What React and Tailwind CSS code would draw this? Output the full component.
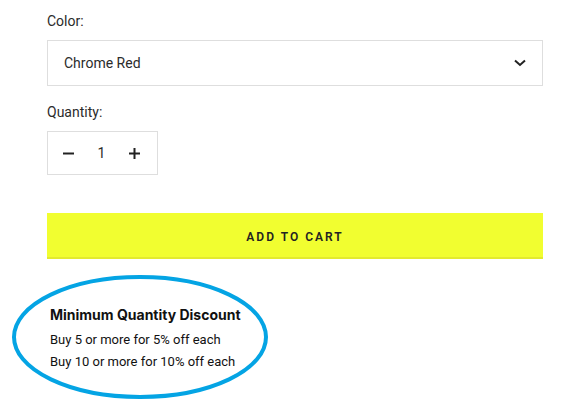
import React from "react";

export default function App() {
  return (
    <div className="relative w-[582px] h-[403px] bg-white overflow-hidden" style={{ fontFamily: "Roboto, 'Noto Sans', sans-serif" }}>
      <div className="ml-[47px] w-[496px] pt-[11px] flex flex-col text-[#2b2b2b]">
        <div className="text-[14px] leading-[20px]">Color:</div>
        <div className="mt-[9px] h-[46px] border border-[#dedede] flex items-center justify-between pl-[16px] pr-[16px]">
          <span className="text-[14px]">Chrome Red</span>
          <svg width="12" height="8" viewBox="0 0 12 8" fill="none">
            <path d="M1 1.5 L6 6 L11 1.5" stroke="#222" strokeWidth="2" />
          </svg>
        </div>
        <div className="mt-[16px] text-[14px] leading-[20px]">Quantity:</div>
        <div className="mt-[9px] w-[111px] h-[44px] border border-[#dedede] flex items-center pl-[15px] pr-[17px]">
          <svg width="11" height="11" viewBox="0 0 11 11"><path d="M0 5.5 H11" stroke="#222" strokeWidth="2" /></svg>
          <span className="flex-1 text-center text-[14px]">1</span>
          <svg width="11" height="11" viewBox="0 0 11 11"><path d="M0 5.5 H11 M5.5 0 V11" stroke="#222" strokeWidth="2" /></svg>
        </div>
        <button className="mt-[38px] h-[46px] w-full bg-[#f1fe30] shadow-[inset_0_-2px_0_#e3ea2e] flex items-center justify-center pt-[2px] text-[12px] font-semibold tracking-[2px] text-[#222]">
          ADD TO CART
        </button>
        <div className="mt-[46px] ml-[3px] text-[#111]">
          <div className="text-[14px] leading-[20px] font-bold" style={{ fontFamily: "Inter, Roboto, sans-serif" }}>Minimum Quantity Discount</div>
          <div className="mt-[4px] text-[13px] leading-[22px]">Buy 5 or more for 5% off each</div>
          <div className="text-[13px] leading-[22px]">Buy 10 or more for 10% off each</div>
        </div>
      </div>
      <svg className="absolute left-0 top-0 pointer-events-none" width="582" height="403">
        <ellipse cx="140" cy="337" rx="126" ry="60" fill="none" stroke="#04a4e4" strokeWidth="4" />
      </svg>
    </div>
  );
}
